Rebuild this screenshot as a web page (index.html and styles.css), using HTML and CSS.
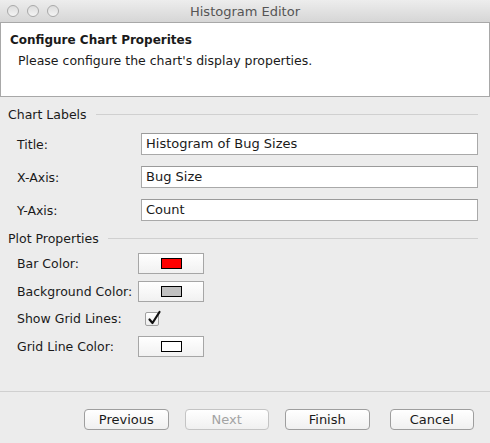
FILE: index.html
```html
<!DOCTYPE html>
<html>
<head>
<meta charset="utf-8">
<link rel="stylesheet" href="styles.css">
</head>
<body>
<div class="window">
  <div class="titlebar">
    <div class="lights"><span class="light"></span><span class="light"></span><span class="light"></span></div>
    <div class="wtitle">Histogram Editor</div>
  </div>
  <div class="header">
    <div class="htitle">Configure Chart Properites</div>
    <div class="hdesc">Please configure the chart's display properties.</div>
  </div>
  <div class="content">
    <div class="section"><span class="stitle">Chart Labels</span><span class="sline"></span></div>
    <div class="textrow"><span class="label">Title:</span><div class="input">Histogram of Bug Sizes</div></div>
    <div class="textrow"><span class="label">X-Axis:</span><div class="input">Bug Size</div></div>
    <div class="textrow"><span class="label">Y-Axis:</span><div class="input">Count</div></div>
    <div class="section s2"><span class="stitle">Plot Properties</span><span class="sline"></span></div>
    <div class="prow"><span class="plabel">Bar Color:</span><div class="cbtn"><span class="swatch red"></span></div></div>
    <div class="prow"><span class="plabel">Background Color:</span><div class="cbtn"><span class="swatch grey"></span></div></div>
    <div class="prow chk"><span class="plabel">Show Grid Lines:</span>
      <div class="checkbox">
        <svg width="18" height="18" viewBox="0 0 18 18"><path d="M4.5 10.5 L7.5 14 L14.5 3" fill="none" stroke="#111" stroke-width="2.2" stroke-linecap="round" stroke-linejoin="round"/></svg>
      </div>
    </div>
    <div class="prow"><span class="plabel">Grid Line Color:</span><div class="cbtn"><span class="swatch white"></span></div></div>
  </div>
  <div class="separator"></div>
  <div class="buttons">
    <div class="btn">Previous</div>
    <div class="btn disabled">Next</div>
    <div class="btn">Finish</div>
    <div class="btn last">Cancel</div>
  </div>
</div>
</body>
</html>
```
FILE: styles.css
```css
html, body {
  margin: 0;
  padding: 0;
}
body {
  width: 490px;
  height: 443px;
  background: #ececec;
  font-family: "DejaVu Sans", "Lucida Grande", sans-serif;
  font-size: 12.5px;
  color: #1a1a1a;
  overflow: hidden;
}
.window {
  width: 490px;
  height: 443px;
  display: flex;
  flex-direction: column;
}
.titlebar {
  height: 22px;
  background: linear-gradient(#ededed, #d6d6d6);
  position: relative;
  display: flex;
  align-items: center;
  justify-content: center;
}
.lights {
  position: absolute;
  left: 7px;
  top: 5px;
  display: flex;
  gap: 8px;
}
.light {
  width: 10px;
  height: 10px;
  border-radius: 50%;
  border: 1px solid #a9a9a9;
  background: linear-gradient(#dcdcdc, #f4f4f4);
  box-sizing: content-box;
}
.wtitle {
  color: #555;
  font-size: 13px;
}
.header {
  height: 73px;
  background: #fff;
  border: 1px solid #a8a8a8;
  box-sizing: content-box;
  padding: 0 9px;
}
.htitle {
  font-weight: bold;
  margin-top: 9px;
  line-height: 17px;
  font-size: 12px;
}
.hdesc {
  margin-top: 3px;
  padding-left: 8px;
  line-height: 17px;
}
.content {
  padding: 8px 12px 0 8px;
  display: flex;
  flex-direction: column;
}
.section {
  display: flex;
  align-items: center;
  height: 18px;
}
.stitle {
  margin-right: 9px;
}
.sline {
  flex: 1;
  height: 1px;
  background: #d0d0d0;
}
.section.s2 {
  margin-top: 8px;
}
.textrow {
  display: flex;
  align-items: center;
  height: 22px;
  margin-top: 11px;
}
.section + .textrow {
  margin-top: 10px;
}
.label {
  width: 124px;
  padding-left: 9px;
  box-sizing: border-box;
  flex: none;
  margin-right: 9px;
}
.input {
  width: 337px;
  height: 22px;
  box-sizing: border-box;
  background: #fff;
  border: 1px solid #a9a9a9;
  border-top-color: #9a9a9a;
  padding-left: 4px;
  line-height: 20px;
  font-size: 13px;
}
.prow {
  display: flex;
  align-items: center;
  height: 21px;
  margin-top: 7px;
}
.section + .prow {
  margin-top: 6px;
}
.plabel {
  width: 130px;
  padding-left: 9px;
  box-sizing: border-box;
  flex: none;
}
.cbtn {
  width: 66px;
  height: 21px;
  box-sizing: border-box;
  border: 1px solid #a6a6a6;
  background: linear-gradient(#ffffff, #f1f1f1);
  display: flex;
  align-items: center;
  justify-content: center;
}
.swatch {
  width: 21px;
  height: 11px;
  box-sizing: border-box;
  border: 1px solid #000;
}
.red { background: #ff0000; }
.grey { background: #c0c0c0; }
.white { background: #ffffff; }
.prow.chk {
  margin-top: 6px;
}
.checkbox {
  width: 12px;
  height: 12px;
  margin-left: 7px;
  border: 1px solid #a0a0a0;
  border-radius: 2px;
  background: linear-gradient(#ffffff, #ececec);
  position: relative;
}
.checkbox svg {
  position: absolute;
  left: -1px;
  top: -4px;
}
.separator {
  height: 1px;
  background: #d0d0d0;
  margin-top: 34px;
}
.buttons {
  display: flex;
  padding-left: 84px;
  margin-top: 17px;
}
.btn {
  width: 85px;
  height: 21px;
  box-sizing: border-box;
  border: 1px solid #9e9e9e;
  border-radius: 4px;
  background: linear-gradient(#ffffff, #f0f0f0);
  text-align: center;
  line-height: 19px;
  font-size: 13px;
  margin-right: 16px;
}
.btn.disabled {
  color: #a3a3a3;
  border-color: #c4c4c4;
}
.btn:nth-child(3) {
  margin-right: 20px;
}
```
